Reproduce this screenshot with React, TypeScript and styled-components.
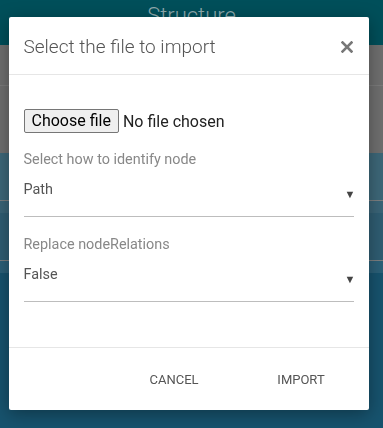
import React, { useState } from 'react';
import styled, { createGlobalStyle } from 'styled-components';

const GlobalStyle = createGlobalStyle`
  html, body {
    margin: 0;
    padding: 0;
    width: 383px;
    height: 428px;
    overflow: hidden;
    font-family: Roboto, "Liberation Sans", Arial, sans-serif;
  }
`;

const Page = styled.div`
  width: 383px;
  height: 428px;
  display: flex;
  flex-direction: column;
  background: #17536e;
`;

const TopBar = styled.div`
  height: 45px;
  background: #004f5a;
  display: flex;
  justify-content: center;
  font-size: 22px;
  font-weight: 300;
  color: #8fa9ad;
  padding-top: 3px;
  box-sizing: border-box;
`;

const GreyArea = styled.div`
  height: 108px;
  background: #6f6f6f;
  display: flex;
  flex-direction: column;
`;

const GreyLine = styled.div`
  margin-top: 40px;
  height: 1px;
  background: #7b7b7b;
`;

const Band = styled.div<{ $bg: string; $h: number; $line?: boolean }>`
  height: ${p => p.$h}px;
  background: ${p => p.$bg};
  border-bottom: ${p => (p.$line ? '1px solid #7c7f80' : 'none')};
  box-sizing: border-box;
`;

const Overlay = styled.div`
  position: fixed;
  inset: 0;
  display: flex;
  align-items: flex-start;
  justify-content: center;
  padding-top: 17px;
`;

const Dialog = styled.div`
  width: 360px;
  height: 393px;
  background: #fff;
  border-radius: 2px;
  box-shadow: 0 4px 18px rgba(0, 0, 0, 0.35);
  display: flex;
  flex-direction: column;
  margin-left: -6px;
`;

const Header = styled.div`
  height: 58px;
  box-sizing: border-box;
  border-bottom: 1px solid #e6e6e6;
  display: flex;
  align-items: center;
  justify-content: space-between;
  padding: 2px 14px 0 15px;
`;

const Title = styled.h3`
  margin: 0;
  font-size: 19px;
  font-weight: 300;
  color: #555;
`;

const CloseButton = styled.button`
  background: none;
  border: none;
  padding: 0;
  width: 16px;
  height: 16px;
  display: flex;
  align-items: center;
  justify-content: center;
  cursor: pointer;
`;

const Body = styled.div`
  flex: 1;
  padding: 34px 15px 0 15px;
  display: flex;
  flex-direction: column;
`;

const FileRow = styled.label`
  display: flex;
  align-items: center;
  gap: 4px;
  font-size: 16px;
  color: #222;
  font-family: Roboto, Arial, sans-serif;
`;

const FileButton = styled.span`
  display: inline-block;
  height: 24px;
  line-height: 22px;
  box-sizing: border-box;
  padding: 0 7px;
  border: 1px solid #767676;
  border-radius: 2px;
  background: #efefef;
  color: #000;
`;

const HiddenInput = styled.input`
  display: none;
`;

const Field = styled.div<{ $top: number }>`
  margin-top: ${p => p.$top}px;
  display: flex;
  flex-direction: column;
`;

const Label = styled.div`
  font-size: 14.4px;
  color: #888;
  line-height: 16px;
`;

const SelectBox = styled.div`
  margin-top: 14px;
  height: 35px;
  box-sizing: border-box;
  border-bottom: 1px solid #bdbdbd;
  display: flex;
  justify-content: space-between;
  font-size: 14.4px;
  color: #555;
  line-height: 16px;
`;

const Arrow = styled.span`
  font-size: 11px;
  color: #444;
  margin-top: 5px;
  margin-right: -2px;
`;

const Footer = styled.div`
  height: 62px;
  border-top: 1px solid #e6e6e6;
  display: flex;
  justify-content: flex-end;
  align-items: center;
  padding-right: 4px;
`;

const FlatButton = styled.button`
  background: none;
  border: none;
  font-family: Roboto, "Liberation Sans", Arial, sans-serif;
  font-size: 13px;
  color: #555;
  padding: 0;
  width: 127px;
  text-align: center;
  cursor: pointer;
`;

const SelectField = ({ label, value, top }: { label: string; value: string; top: number }) => (
  <Field $top={top}>
    <Label>{label}</Label>
    <SelectBox>
      <span>{value}</span>
      <Arrow>▼</Arrow>
    </SelectBox>
  </Field>
);

export default function App() {
  const [fileName, setFileName] = useState('');

  return (
    <>
      <GlobalStyle />
      <Page>
        <TopBar>Structure</TopBar>
        <GreyArea>
          <GreyLine />
        </GreyArea>
        <Band $bg="#3d6778" $h={48} $line />
        <Band $bg="#3a6477" $h={12} />
        <Band $bg="#2f5d72" $h={48} $line />
        <Band $bg="#2b6078" $h={12} />
      </Page>
      <Overlay>
        <Dialog>
          <Header>
            <Title>Select the file to import</Title>
            <CloseButton aria-label="close">
              <svg width="12" height="12" viewBox="0 0 12 12">
                <path d="M1.5 1.5 L10.5 10.5 M10.5 1.5 L1.5 10.5" stroke="#777" strokeWidth="2.6" strokeLinecap="square" />
              </svg>
            </CloseButton>
          </Header>
          <Body>
            <FileRow>
              <FileButton>Choose file</FileButton>
              <span>{fileName || 'No file chosen'}</span>
              <HiddenInput type="file" onChange={e => setFileName(e.target.files?.[0]?.name ?? '')} />
            </FileRow>
            <SelectField label="Select how to identify node" value="Path" top={19} />
            <SelectField label="Replace nodeRelations" value="False" top={20} />
          </Body>
          <Footer>
            <FlatButton>CANCEL</FlatButton>
            <FlatButton>IMPORT</FlatButton>
          </Footer>
        </Dialog>
      </Overlay>
    </>
  );
}
